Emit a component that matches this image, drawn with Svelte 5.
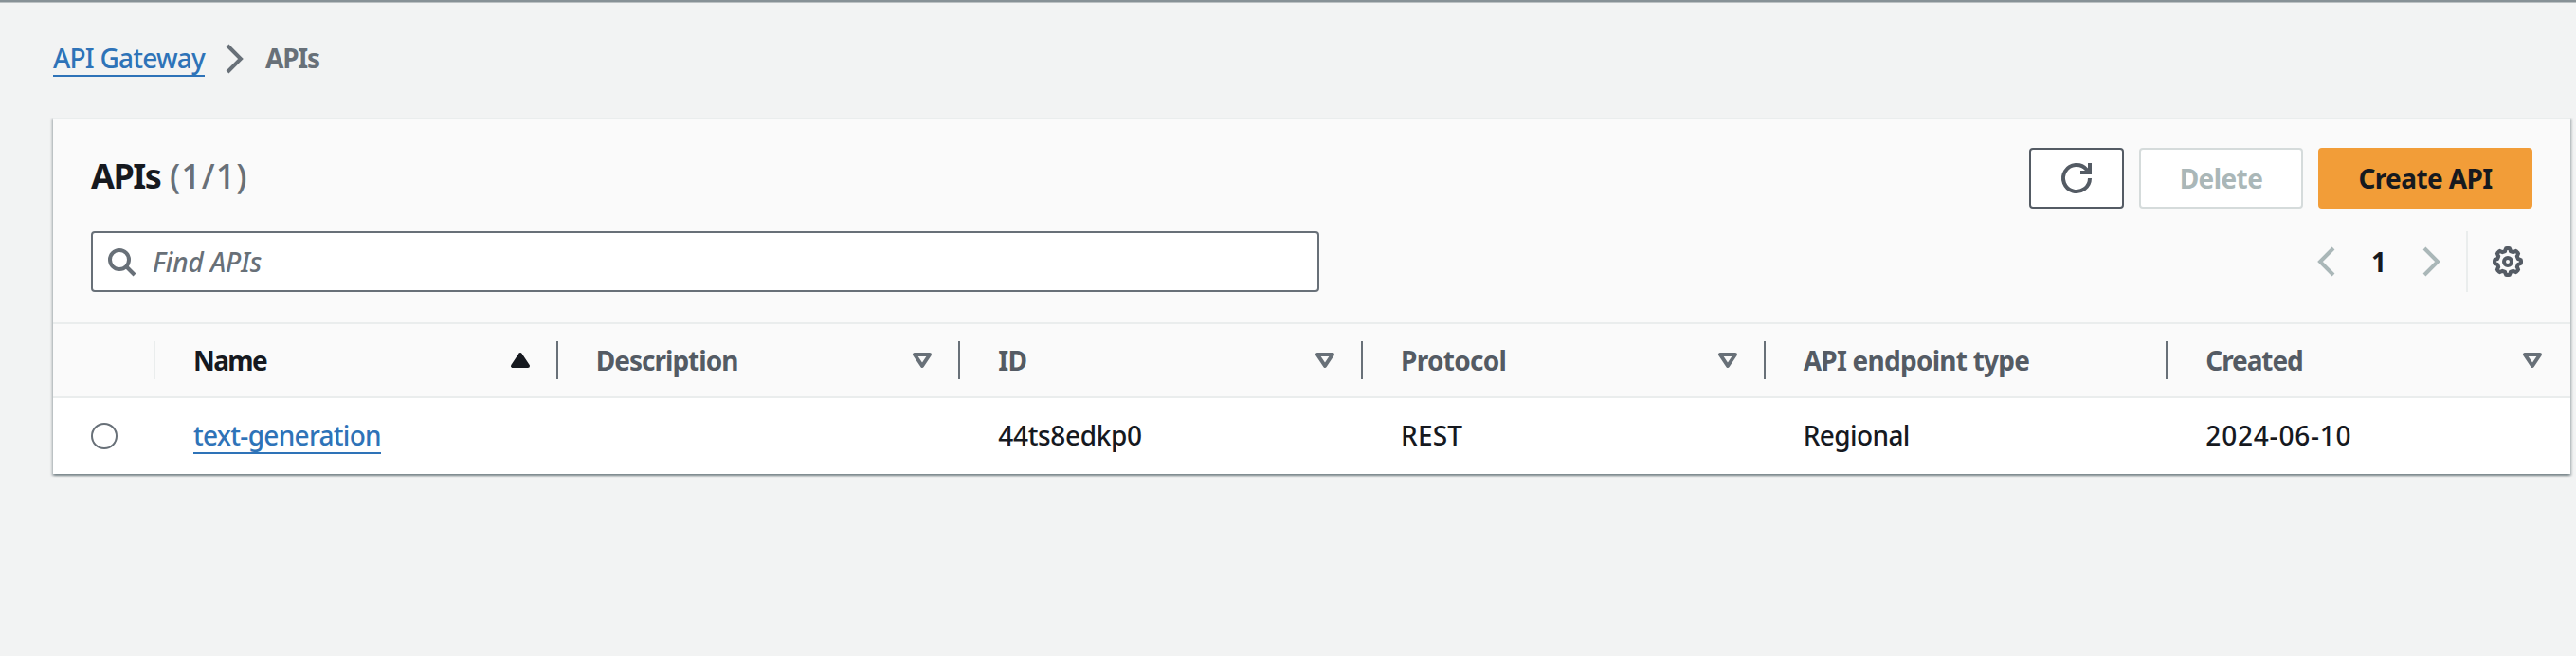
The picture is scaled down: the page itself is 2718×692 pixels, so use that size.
<script>
  const columns = [
    { label: 'Name', sort: 'asc', ls: -1.6, value: 'text-generation', vls: -0.7, link: true },
    { label: 'Description', sort: 'none', ls: -0.98, value: '', vls: 0 },
    { label: 'ID', sort: 'none', ls: -0.8, value: '44ts8edkp0', vls: -0.35 },
    { label: 'Protocol', sort: 'none', ls: -0.7, value: 'REST', vls: 0.2 },
    { label: 'API endpoint type', sort: null, ls: -0.75, value: 'Regional', vls: -0.6 },
    { label: 'Created', sort: 'none', ls: -1.1, value: '2024-06-10', vls: 0.8 }
  ];

  // Eight-lobed outline for the settings icon, in the 16-unit icon grid.
  const gear = Array.from({ length: 97 }, (_, i) => {
    const a = (i / 96) * Math.PI * 2;
    const r = 6.3 + 0.72 * Math.tanh(2.6 * Math.cos(8 * a));
    return `${i ? 'L' : 'M'}${(8 + r * Math.sin(a)).toFixed(2)} ${(8 - r * Math.cos(a)).toFixed(2)}`;
  }).join('') + 'Z';
</script>

<div class="page">
  <nav class="crumbs" aria-label="Breadcrumbs">
    <a href="#gateway" class="link crumb-link">API Gateway</a>
    <svg class="icon sep" viewBox="0 0 16 16"><path d="M4 1l7 7-7 7" /></svg>
    <span class="current">APIs</span>
  </nav>

  <section class="card">
    <header class="top">
      <div class="title-row">
        <h2><span class="title">APIs</span><span class="count">(1/1)</span></h2>
        <div class="actions">
          <button class="btn refresh" aria-label="Refresh">
            <svg class="icon" viewBox="0 0 16 16">
              <path d="M15 8a7 7 0 1 1-1.75-4.62L14.6 5" />
              <path d="M15 0v5h-5" />
            </svg>
          </button>
          <button class="btn delete" disabled>Delete</button>
          <button class="btn create">Create API</button>
        </div>
      </div>
      <div class="tools">
        <label class="search">
          <svg class="icon" viewBox="0 0 16 16">
            <circle cx="7" cy="7" r="5" />
            <path d="M15 15l-4.5-4.5" />
          </svg>
          <input type="text" placeholder="Find APIs" />
        </label>
        <div class="paging">
          <svg class="icon faint" viewBox="0 0 16 16"><path d="M12 1L5 8l7 7" /></svg>
          <span class="num">1</span>
          <svg class="icon faint" viewBox="0 0 16 16"><path d="M4 1l7 7-7 7" /></svg>
          <div class="settings">
            <svg class="icon" viewBox="0 0 16 16">
              <path d={gear} />
              <circle cx="8" cy="8" r="2" />
            </svg>
          </div>
        </div>
      </div>
    </header>

    <div class="grid head">
      <div class="pick"></div>
      {#each columns as c}
        <div class="th" class:sorted={c.sort === 'asc'}>
          <span style:letter-spacing="{c.ls}px">{c.label}</span>
          {#if c.sort === 'asc'}
            <svg class="icon caret filled" viewBox="0 0 16 16"><path d="M4 11h8L8 5l-4 6z" /></svg>
          {:else if c.sort}
            <svg class="icon caret" viewBox="0 0 16 16"><path d="M4 5h8l-4 6-4-6z" /></svg>
          {/if}
        </div>
      {/each}
    </div>
    <div class="grid row">
      <div class="pick"><span class="radio"></span></div>
      {#each columns as c}
        <div class="td">
          {#if c.link}
            <a href="#api" class="link" style:letter-spacing="{c.vls}px">{c.value}</a>
          {:else}
            <span style:letter-spacing="{c.vls}px">{c.value}</span>
          {/if}
        </div>
      {/each}
    </div>
  </section>
</div>

<style>
  :global(body) {
    margin: 0;
    background: #f2f3f3;
  }
  .page {
    box-sizing: border-box;
    height: 692px;
    padding: 34px 6px 0 56px;
    overflow: hidden;
    background: #f2f3f3;
    box-shadow: inset 0 2px 0 #879196, inset 0 3px 0 #bcc1c3;
    font: 500 28px/40px 'Noto Sans', 'Open Sans', sans-serif;
    color: #16191f;
  }
  .icon {
    display: block;
    width: 32px;
    height: 32px;
    flex: none;
    overflow: visible;
    fill: none;
    stroke: #545b64;
    stroke-width: 2;
  }
  .crumbs {
    display: flex;
    align-items: center;
    height: 54px;
    margin-bottom: 36px;
  }
  .link {
    display: block;
    box-sizing: border-box;
    height: 40px;
    line-height: 38px;
    color: #2e73b8;
    text-decoration: none;
    border-bottom: 2px solid #2e73b8;
  }
  .crumb-link {
    width: 160px;
    height: 39px;
    line-height: 39px;
    letter-spacing: -0.78px;
    white-space: nowrap;
  }
  .sep {
    margin: 2px 16px 0;
    stroke: #687078;
  }
  .current {
    margin-top: 0;
    font-weight: 700;
    letter-spacing: -1.2px;
    color: #687078;
  }
  .card {
    width: 2656px;
    background: #fff;
    border-top: 2px solid #eaeded;
    box-shadow:
      0 2px 2px 0 rgba(0, 28, 36, 0.3),
      2px 2px 2px 0 rgba(0, 28, 36, 0.15),
      -2px 2px 2px 0 rgba(0, 28, 36, 0.15);
  }
  .top {
    box-sizing: border-box;
    height: 216px;
    padding: 30px 40px 0;
    background: #fafafa;
    border-bottom: 2px solid #eaeded;
  }
  .title-row,
  .actions,
  .tools,
  .paging {
    display: flex;
    align-items: center;
  }
  .title-row,
  .tools {
    justify-content: space-between;
    height: 64px;
  }
  .tools {
    margin-top: 24px;
  }
  h2 {
    display: flex;
    margin: 0;
    padding-bottom: 4px;
    font-size: 36px;
    line-height: 44px;
  }
  .title {
    width: 83px;
    letter-spacing: -1.5px;
  }
  .count {
    font-weight: 500;
    letter-spacing: 1px;
    color: #687078;
  }
  .actions {
    gap: 16px;
  }
  .btn {
    box-sizing: border-box;
    height: 64px;
    padding: 0;
    border: 2px solid #545b64;
    border-radius: 4px;
    background: #fff;
    font: 700 28px/40px 'Noto Sans', 'Open Sans', sans-serif;
    letter-spacing: -0.6px;
    white-space: nowrap;
  }
  .refresh {
    display: grid;
    place-items: center;
    width: 100px;
  }
  .delete {
    width: 173px;
    border-color: #d5dbdb;
    color: #aab7b8;
  }
  .create {
    width: 226px;
    border-color: #f29d38;
    background: #f29d38;
    color: #16191f;
  }
  .search {
    display: flex;
    align-items: center;
    box-sizing: border-box;
    width: 1296px;
    height: 64px;
    padding: 0 14px;
    background: #fff;
    border: 2px solid #687078;
    border-radius: 4px;
  }
  .search .icon {
    stroke: #687078;
  }
  input {
    flex: 1;
    height: 40px;
    margin-left: 17px;
    padding: 0;
    border: 0;
    outline: 0;
    background: transparent;
    font: inherit;
    letter-spacing: -0.1px;
  }
  input::placeholder {
    color: #687078;
    font-style: italic;
    opacity: 1;
  }
  .paging {
    height: 64px;
  }
  .faint {
    stroke: #aab7b8;
  }
  .num {
    width: 80px;
    padding-bottom: 1px;
    text-align: center;
    font-weight: 700;
  }
  .settings {
    display: flex;
    align-items: center;
    box-sizing: border-box;
    width: 70px;
    height: 64px;
    margin-left: 20px;
    padding-left: 26px;
    border-left: 2px solid #eaeded;
  }
  .grid {
    display: grid;
    grid-template-columns: 108px repeat(6, 1fr);
    align-items: center;
    box-sizing: border-box;
  }
  .head {
    height: 78px;
    background: #fafafa;
    border-bottom: 2px solid #eaeded;
    font-weight: 700;
    color: #545b64;
  }
  .head .pick,
  .th {
    box-sizing: border-box;
    height: 40px;
    border-right: 2px solid #687078;
  }
  .head .pick {
    border-right-color: #eaeded;
  }
  .th {
    display: flex;
    align-items: center;
    justify-content: space-between;
    padding: 0 22px 0 40px;
    line-height: 38px;
  }
  .th span {
    margin-top: -1px;
  }
  .th:last-child {
    border-right-color: transparent;
  }
  .sorted {
    color: #16191f;
  }
  .caret {
    stroke: #687078;
    stroke-linejoin: round;
  }
  .filled {
    stroke: #16191f;
    fill: #16191f;
  }
  .row {
    height: 80px;
  }
  .row .pick {
    padding-left: 40px;
  }
  .radio {
    display: block;
    box-sizing: border-box;
    width: 28px;
    height: 28px;
    border: 2px solid #687078;
    border-radius: 50%;
  }
  .td {
    display: flex;
    padding-left: 40px;
  }
  .td span {
    line-height: 38px;
    padding-bottom: 2px;
  }
  .td .link {
    height: 39px;
    margin-bottom: 1px;
  }
</style>
